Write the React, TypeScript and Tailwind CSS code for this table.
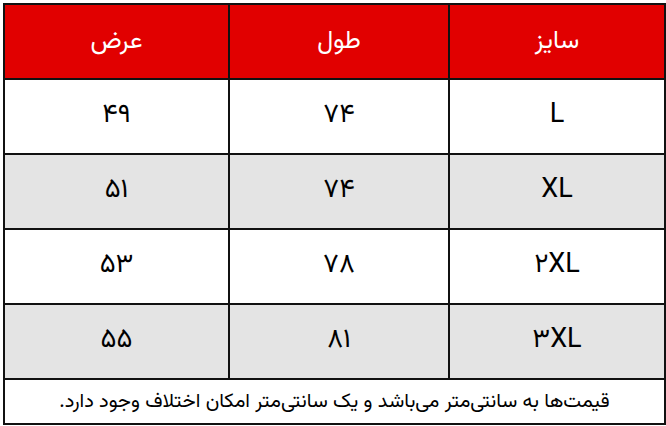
import React from "react";

const rows = [
  { size: "L", length: "۷۴", width: "۴۹" },
  { size: "XL", length: "۷۴", width: "۵۱" },
  { size: "۲XL", length: "۷۸", width: "۵۳" },
  { size: "۳XL", length: "۸۱", width: "۵۵" },
];

export default function App() {
  return (
    <div
      dir="rtl"
      className="w-[666px] h-[426px] bg-white pt-[3px] pl-[3px]"
      style={{ fontFamily: '"Vazirmatn", "Noto Sans Arabic", "DejaVu Sans", sans-serif' }}
    >
      <table className="w-[661px] border-collapse border-2 border-[#111] table-fixed">
        <colgroup>
          <col className="w-[216px]" />
          <col className="w-[220px]" />
          <col className="w-[225px]" />
        </colgroup>
        <thead>
          <tr className="h-[75px] bg-[#e10000] text-white text-[25px]">
            <th className="border-2 border-[#111] font-normal">سایز</th>
            <th className="border-2 border-[#111] font-normal">طول</th>
            <th className="border-2 border-[#111] font-normal">عرض</th>
          </tr>
        </thead>
        <tbody>
          {rows.map((r, i) => (
            <tr
              key={r.size}
              className={`h-[75px] text-[27px] text-black ${i % 2 === 1 ? "bg-[#e4e4e4]" : "bg-white"}`}
            >
              <td className="border-2 border-[#111] text-center">{r.size}</td>
              <td className="border-2 border-[#111] text-center">{r.length}</td>
              <td className="border-2 border-[#111] text-center">{r.width}</td>
            </tr>
          ))}
          <tr className="h-[45px]">
            <td colSpan={3} className="border-2 border-[#111] text-center text-[20px] text-black">
              قیمت‌ها به سانتی‌متر می‌باشد و یک سانتی‌متر امکان اختلاف وجود دارد.
            </td>
          </tr>
        </tbody>
      </table>
    </div>
  );
}
